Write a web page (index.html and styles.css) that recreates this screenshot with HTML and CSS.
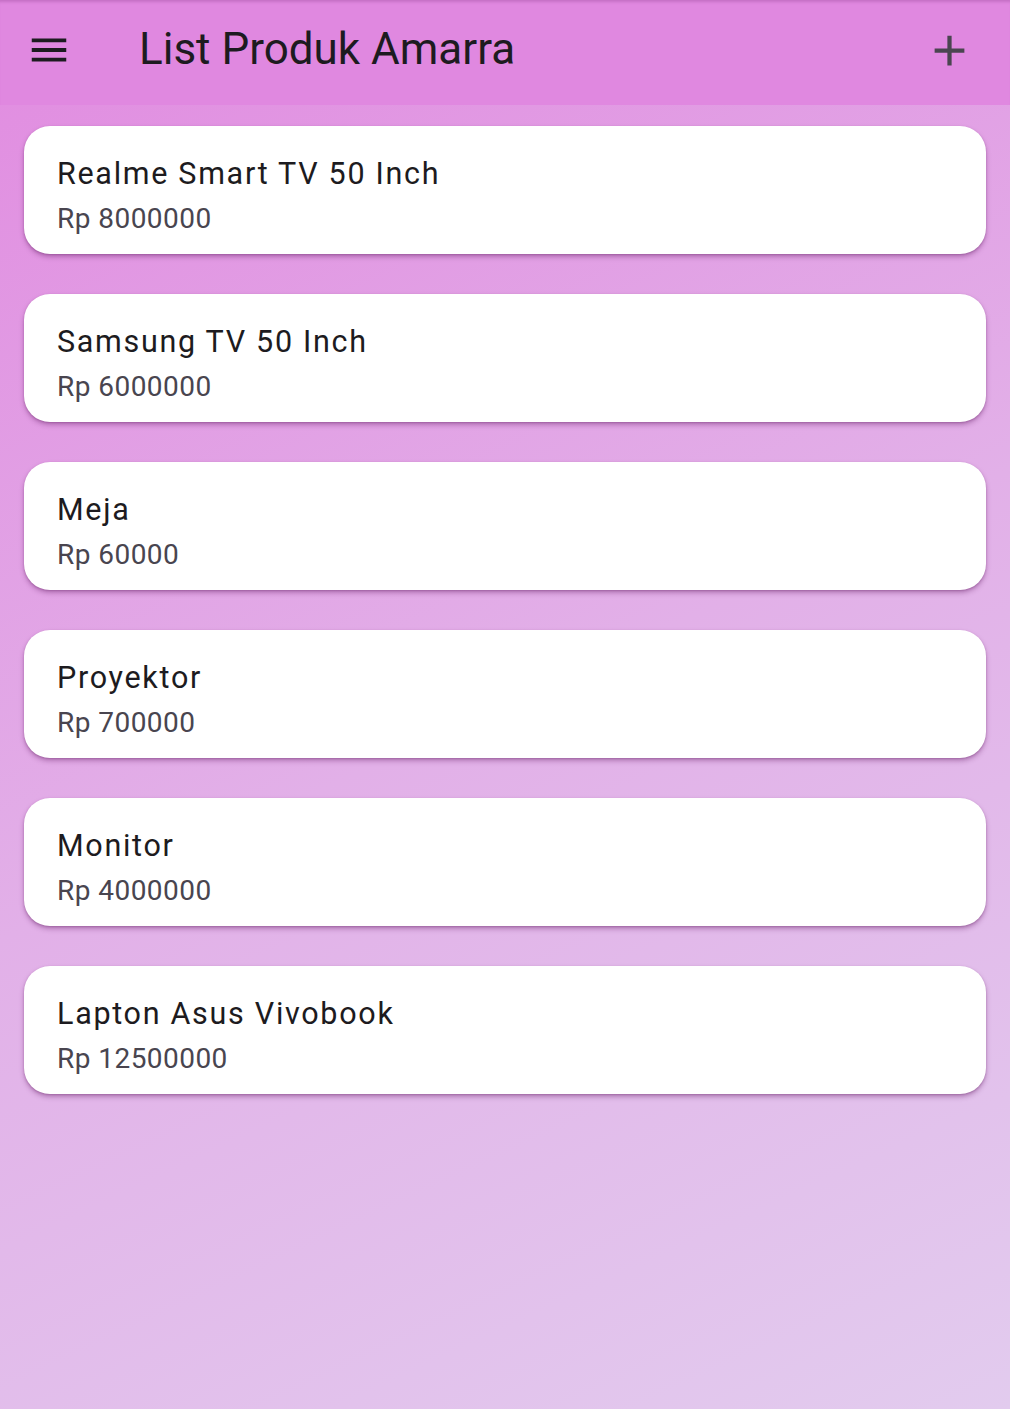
FILE: index.html
```html
<!DOCTYPE html>
<html lang="id">
<head>
<meta charset="utf-8">
<title>List Produk Amarra</title>
<link rel="stylesheet" href="styles.css">
</head>
<body>
<div class="screen">
  <header class="appbar">
    <button class="icon-btn menu" aria-label="Menu">
      <svg viewBox="0 0 24 24" width="46" height="46"><path d="M3 18h18v-2H3v2zm0-5h18v-2H3v2zm0-7v2h18V6H3z" fill="#1d1b20"/></svg>
    </button>
    <h1 class="title">List Produk Amarra</h1>
    <button class="icon-btn add" aria-label="Tambah">
      <svg viewBox="0 0 24 24" width="51" height="51"><path d="M19 13h-6v6h-2v-6H5v-2h6V5h2v6h6v2z" fill="#4a4550"/></svg>
    </button>
  </header>
  <main class="list">
    <div class="card"><div class="name">Realme Smart TV 50 Inch</div><div class="price">Rp 8000000</div></div>
    <div class="card"><div class="name">Samsung TV 50 Inch</div><div class="price">Rp 6000000</div></div>
    <div class="card"><div class="name">Meja</div><div class="price">Rp 60000</div></div>
    <div class="card"><div class="name">Proyektor</div><div class="price">Rp 700000</div></div>
    <div class="card"><div class="name">Monitor</div><div class="price">Rp 4000000</div></div>
    <div class="card"><div class="name">Lapton Asus Vivobook</div><div class="price">Rp 12500000</div></div>
  </main>
</div>
</body>
</html>
```

FILE: styles.css
```css
html, body {
  margin: 0;
  padding: 0;
}
body {
  font-family: Roboto, "Noto Sans", sans-serif;
}
.screen {
  width: 1010px;
  height: 1409px;
  background: linear-gradient(155deg, #e18be0 0%, #e2b0e8 50%, #e2cbee 100%);
  overflow: hidden;
}
.appbar {
  height: 105px;
  box-sizing: border-box;
  background: #e088e0;
  display: flex;
  align-items: center;
  padding: 0 35px 0 26px;
  box-shadow: inset 0 4px 3px -2px rgba(120, 40, 120, 0.25);
}
.icon-btn {
  border: 0;
  background: none;
  padding: 0;
  display: flex;
  align-items: center;
  justify-content: center;
}
.icon-btn svg {
  display: block;
}
.menu {
  width: 46px;
  height: 46px;
  margin-bottom: 5px;
}
.title {
  margin: 0 0 8px 67px;
  font-weight: 400;
  font-size: 44px;
  color: #1d1b20;
  flex: 1;
  line-height: 1;
}
.add {
  width: 51px;
  height: 51px;
  margin-bottom: 5px;
}
.list {
  display: flex;
  flex-direction: column;
  gap: 40px;
  padding: 21px 24px;
}
.card {
  background: #fff;
  border-radius: 26px;
  height: 128px;
  box-sizing: border-box;
  padding: 28px 33px 0;
  box-shadow: 0 3px 5px rgba(110, 40, 110, 0.4), 0 1px 2px rgba(110, 40, 110, 0.3);
}
.name {
  font-size: 30.5px;
  letter-spacing: 1.7px;
  line-height: 40px;
  color: #1d1b20;
}
.price {
  font-size: 28px;
  letter-spacing: 0.45px;
  line-height: 38px;
  color: #49454f;
  margin-top: 6px;
}
```
